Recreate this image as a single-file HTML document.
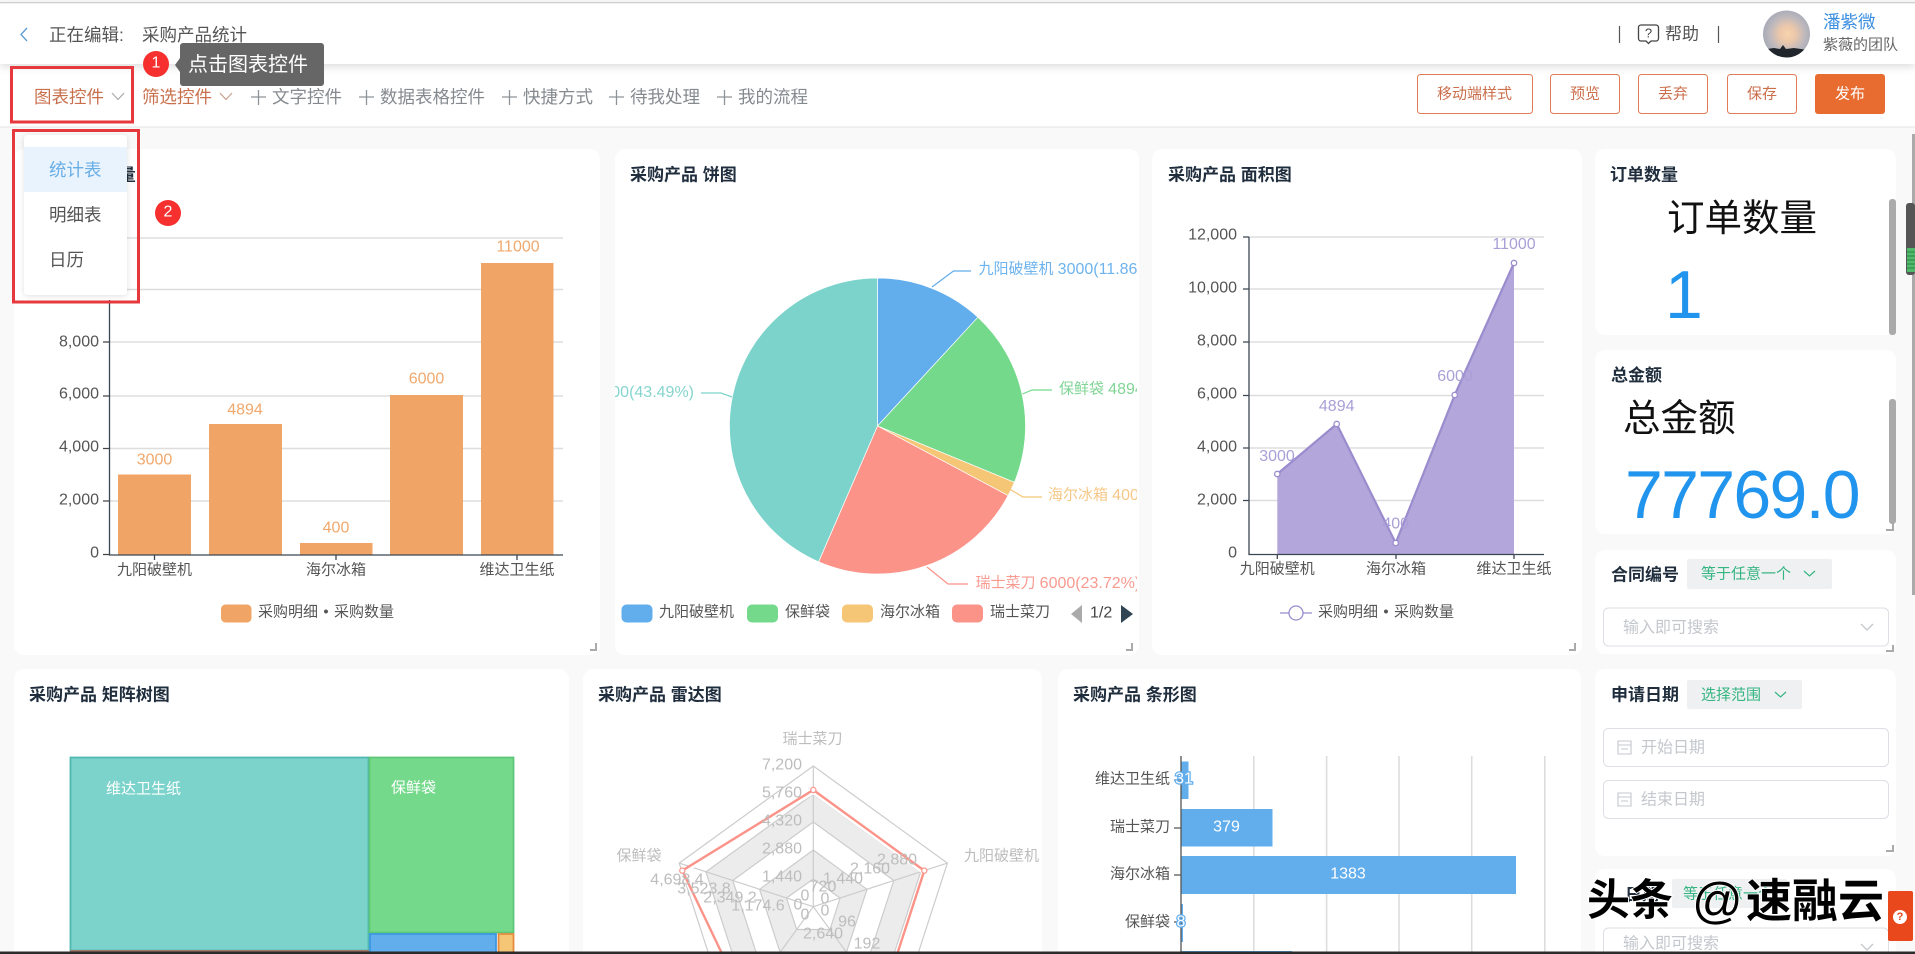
<!DOCTYPE html>
<html lang="zh">
<head>
<meta charset="utf-8">
<title>采购产品统计</title>
<style>
html,body{margin:0;padding:0;width:1915px;height:954px;overflow:hidden;background:#f9f9f9}
svg{display:block;position:absolute;left:0;top:0}
text{font-family:"Liberation Sans","Noto Sans CJK SC",sans-serif;dominant-baseline:central}
.t{font-size:17px;font-weight:700;fill:#1f2d3d}
.ax{font-size:16px;fill:#555}
.xl{font-size:15px;fill:#555}
.lg{word-spacing:1.2px}
.m{text-anchor:middle}
.e{text-anchor:end}
.o{font-size:16px;fill:#f1a86c;text-anchor:middle}
.p{font-size:16px;fill:#a99fd6;text-anchor:middle}
.r{font-size:16px;fill:#bdbdbd;text-anchor:middle}
.tb{font-size:17.5px;fill:#858a8f}
.btn{font-size:15px;fill:#cb6f4c;text-anchor:middle}
.gh{fill:none;stroke:#ddd;stroke-width:1.6}
.card{fill:#fff}
.hd{fill:none;stroke:#aaa;stroke-width:2}
.ph{font-size:16px;fill:#c4c7cc}
.gr{font-size:15px;fill:#35b582}
.bv{font-size:16px;fill:#fff;text-anchor:middle;stroke:#62aeed;stroke-width:2.5;paint-order:stroke}
</style>
</head>
<body>
<svg width="1915" height="954" viewBox="0 0 1915 954" xmlns="http://www.w3.org/2000/svg">
<defs>
<clipPath id="pc"><rect x="615" y="149" width="522" height="506"/></clipPath>
<clipPath id="av"><circle cx="1786.500" cy="34" r="23.500"/></clipPath>
<radialGradient id="ag" cx="0.52" cy="0.5" r="0.58">
<stop offset="0" stop-color="#f8d3ac"/><stop offset="0.3" stop-color="#ebc7ab"/><stop offset="0.65" stop-color="#bdb8bd"/><stop offset="1" stop-color="#9fa5b5"/>
</radialGradient>
<filter id="sh" x="-20%" y="-20%" width="140%" height="140%"><feDropShadow dx="0" dy="1" stdDeviation="3" flood-color="#000" flood-opacity=".12"/></filter>
<filter id="hs" x="0" y="-50%" width="100%" height="200%"><feDropShadow dx="0" dy="3" stdDeviation="4" flood-color="#000" flood-opacity=".13"/></filter>
</defs>

<rect width="1915" height="954" fill="#f9f9f9"/>

<!-- cards -->
<rect class="card" x="14" y="149" width="586" height="506" rx="10"/>
<rect class="card" x="615" y="149" width="524" height="506" rx="10"/>
<rect class="card" x="1152" y="149" width="430" height="506" rx="10"/>
<rect class="card" x="1595" y="149" width="301" height="186" rx="10"/>
<rect class="card" x="1595" y="350" width="301" height="184" rx="10"/>
<rect class="card" x="1595" y="550" width="301" height="104" rx="10"/>
<rect class="card" x="1595" y="669" width="301" height="187" rx="10"/>
<path class="card" d="M1595 954V879a10 10 0 0 1 10-10h281a10 10 0 0 1 10 10V954Z"/>
<path class="card" d="M14 954V679a10 10 0 0 1 10-10h535a10 10 0 0 1 10 10V954Z"/>
<path class="card" d="M583 954V679a10 10 0 0 1 10-10h439a10 10 0 0 1 10 10V954Z"/>
<path class="card" d="M1058 954V679a10 10 0 0 1 10-10h503a10 10 0 0 1 10 10V954Z"/>

<!-- bar chart -->
<text class="t" x="29" y="175">采购产品 数量</text>
<g class="gh">
<path d="M110 238H563M110 289.500H563M110 342H563M110 396H563M110 448.500H563M110 501H563"/>
</g>
<g fill="#555">
<text class="ax e" x="99" y="342">8,000</text>
<text class="ax e" x="99" y="394">6,000</text>
<text class="ax e" x="99" y="447">4,000</text>
<text class="ax e" x="99" y="500">2,000</text>
<text class="ax e" x="99" y="553">0</text>
</g>
<path d="M103 342h7M103 396h7M103 448.500h7M103 501h7M103 554.500h7" stroke="#444" stroke-width="1.300" fill="none"/>
<g fill="#f0a566">
<rect x="118" y="474.500" width="73" height="80"/>
<rect x="209" y="424" width="73" height="130.500"/>
<rect x="300" y="543" width="72.500" height="11.500"/>
<rect x="390" y="395" width="73" height="159.500"/>
<rect x="481" y="263" width="72.500" height="291.500"/>
</g>
<path d="M109.500 300V555H563M154.500 555v5M336 555v5M517 555v5" stroke="#3b4650" stroke-width="1.300" fill="none"/>
<text class="o" x="154.500" y="460">3000</text>
<text class="o" x="245" y="410">4894</text>
<text class="o" x="336" y="528">400</text>
<text class="o" x="426.500" y="379">6000</text>
<text class="o" x="518" y="247">11000</text>
<text class="xl m" x="154.500" y="570">九阳破壁机</text>
<text class="xl m" x="336" y="570">海尔冰箱</text>
<text class="xl m" x="517" y="570">维达卫生纸</text>
<rect x="221" y="604.500" width="30.500" height="18" rx="4.500" fill="#f0a566"/>
<text class="xl lg" x="258" y="612">采购明细 • 采购数量</text>
<path class="hd" d="M590 650h6v-7"/>

<!-- pie -->
<text class="t" x="630" y="175">采购产品 饼图</text>
<g clip-path="url(#pc)">
<g stroke="#fff" stroke-width=".7">
<path d="M877.500 426V278A148 148 0 0 1 977.900 317.200Z" fill="#62aeed"/>
<path d="M877.500 426L977.900 317.200A148 148 0 0 1 1014.400 482.300Z" fill="#75d98c"/>
<path d="M877.500 426L1014.400 482.300A148 148 0 0 1 1008.100 495.600Z" fill="#f6c677"/>
<path d="M877.500 426L1008.100 495.600A148 148 0 0 1 818.600 561.800Z" fill="#fb9389"/>
<path d="M877.500 426L818.600 561.800A148 148 0 0 1 877.500 278Z" fill="#7bd3cb"/>
</g>
<g fill="none" stroke-width="1.200">
<path d="M932 287L953.500 271H971" stroke="#62aeed"/>
<path d="M1022.500 394L1032 390H1052" stroke="#75d98c"/>
<path d="M1009.500 489L1023 497H1042" stroke="#f6c677"/>
<path d="M927 567L948 584H968" stroke="#fb9389"/>
<path d="M701 393H721L732 397" stroke="#7bd3cb"/>
</g>
<g font-size="15">
<text x="978.500" y="269" fill="#6db3ee">九阳破壁机 <tspan font-size="16">3000(11.86%)</tspan></text>
<text x="1059" y="389" fill="#80d596">保鲜袋 <tspan font-size="16">4894(19.35%)</tspan></text>
<text x="1048" y="495" fill="#f6c888">海尔冰箱 <tspan font-size="16">400(1.58%)</tspan></text>
<text x="975.500" y="583" fill="#f99a90">瑞士菜刀 <tspan font-size="16">6000(23.72%)</tspan></text>
<text x="694" y="392" fill="#85d5ce" text-anchor="end">维达卫生纸 <tspan font-size="16">11000(43.49%)</tspan></text>
</g>
</g>
<rect x="621.500" y="604.500" width="31" height="18" rx="5" fill="#62aeed"/>
<text class="xl" x="659" y="612">九阳破壁机</text>
<rect x="747" y="604.500" width="31" height="18" rx="5" fill="#75d98c"/>
<text class="xl" x="785" y="612">保鲜袋</text>
<rect x="842" y="604.500" width="31" height="18" rx="5" fill="#f6c677"/>
<text class="xl" x="880" y="612">海尔冰箱</text>
<rect x="952" y="604.500" width="31" height="18" rx="5" fill="#fb9389"/>
<text class="xl" x="990" y="612">瑞士菜刀</text>
<path d="M1082 605V623L1071 614Z" fill="#aaa"/>
<text x="1090" y="613" font-size="16" fill="#444">1/2</text>
<path d="M1121 605V623L1133 614Z" fill="#2f4554"/>
<path class="hd" d="M1126 650h6v-7"/>

<!-- area -->
<text class="t" x="1168" y="175">采购产品 面积图</text>
<path class="gh" d="M1249 237H1544M1249 289H1544M1249 342H1544M1249 395.500H1544M1249 448H1544M1249 500.500H1544"/>
<path d="M1277.300 474L1336.700 424L1395.700 543L1454.700 395L1514 263V554H1277.300Z" fill="#b3a6db"/>
<path d="M1277.300 474L1336.700 424L1395.700 543L1454.700 395L1514 263" fill="none" stroke="#9a8ccd" stroke-width="2.200"/>
<g fill="#fff" stroke="#9a8ccd" stroke-width="1.300">
<circle cx="1277.300" cy="474" r="2.700"/><circle cx="1336.700" cy="424" r="2.700"/><circle cx="1395.700" cy="543" r="2.700"/><circle cx="1454.700" cy="395" r="2.700"/><circle cx="1514" cy="263" r="2.700"/>
</g>
<path d="M1249 237V554.500H1544M1243 237h6M1243 289h6M1243 342h6M1243 395.500h6M1243 448h6M1243 500.500h6M1277.300 554v5M1396 554v5M1514 554v5" fill="none" stroke="#3b4650" stroke-width="1.300"/>
<g>
<text class="ax e" x="1237" y="235">12,000</text>
<text class="ax e" x="1237" y="288">10,000</text>
<text class="ax e" x="1237" y="341">8,000</text>
<text class="ax e" x="1237" y="394">6,000</text>
<text class="ax e" x="1237" y="447">4,000</text>
<text class="ax e" x="1237" y="500">2,000</text>
<text class="ax e" x="1237" y="553">0</text>
</g>
<text class="p" x="1277" y="456.500">3000</text>
<text class="p" x="1336.700" y="406.500">4894</text>
<text class="p" x="1395.700" y="524">400</text>
<text class="p" x="1455" y="376.500">6000</text>
<text class="p" x="1514" y="244.500">11000</text>
<text class="xl m" x="1277.300" y="569">九阳破壁机</text>
<text class="xl m" x="1396" y="569">海尔冰箱</text>
<text class="xl m" x="1514" y="569">维达卫生纸</text>
<path d="M1280 613h32" stroke="#9a8ccd" stroke-width="1.300"/>
<circle cx="1296" cy="613" r="7" fill="#fff" stroke="#9a8ccd" stroke-width="1.300"/>
<text class="xl lg" x="1318" y="612">采购明细 • 采购数量</text>
<path class="hd" d="M1569 650h6v-7"/>

<!-- order count -->
<text class="t" x="1610" y="175">订单数量</text>
<text x="1667" y="218" font-size="37.500" fill="#111">订单数量</text>
<text x="1665" y="295" font-size="68" fill="#2195ee">1</text>
<rect x="1889" y="199" width="7" height="136" rx="3" fill="#aaa"/>

<!-- total -->
<text class="t" x="1611" y="375.500">总金额</text>
<text x="1623" y="418" font-size="37.500" fill="#111">总金额</text>
<text x="1625" y="495" font-size="68" letter-spacing="-1.700" fill="#2195ee">77769.0</text>
<rect x="1889" y="399" width="7" height="125" rx="3" fill="#aaa"/>
<path class="hd" d="M1886 530h7v-7"/>

<!-- contract -->
<text class="t" x="1611" y="575">合同编号</text>
<rect x="1687" y="559" width="145" height="30" rx="2" fill="#eff0f1"/>
<text class="gr" x="1701" y="574">等于任意一个</text>
<path d="M1804 571l5.500 5 5.500-5" fill="none" stroke="#35b582" stroke-width="1.200"/>
<rect x="1603.500" y="608" width="285" height="38" rx="5" fill="#fff" stroke="#dcdfe4"/>
<text class="ph" x="1623" y="628">输入即可搜索</text>
<path d="M1861 624l6 6 6-6" fill="none" stroke="#c4c7cc" stroke-width="1.300"/>
<path class="hd" d="M1886 651h7v-6"/>

<!-- date -->
<text class="t" x="1611" y="695">申请日期</text>
<rect x="1687" y="680" width="115" height="29" rx="2" fill="#eff0f1"/>
<text class="gr" x="1701" y="695">选择范围</text>
<path d="M1775 692l5.500 5 5.500-5" fill="none" stroke="#35b582" stroke-width="1.200"/>
<rect x="1603.500" y="728.500" width="285" height="38" rx="5" fill="#fff" stroke="#dcdfe4"/>
<path d="M1618 741h13v13h-13zM1618 745h13M1621 749h7" fill="none" stroke="#c4c7cc" stroke-width="1.100"/>
<text class="ph" x="1641" y="748">开始日期</text>
<rect x="1603.500" y="780.500" width="285" height="38" rx="5" fill="#fff" stroke="#dcdfe4"/>
<path d="M1618 793h13v13h-13zM1618 797h13M1621 801h7" fill="none" stroke="#c4c7cc" stroke-width="1.100"/>
<text class="ph" x="1641" y="800">结束日期</text>
<path class="hd" d="M1886 851h7v-6"/>

<!-- last filter -->
<text class="t" x="1625" y="895">日期</text>
<rect x="1672" y="879" width="115" height="29" rx="2" fill="#eff0f1"/>
<text class="gr" x="1683" y="894">等于任意一个</text>
<path d="M1603.500 954V933a5 5 0 0 1 5-5h275a5 5 0 0 1 5 5V954" fill="#fff" stroke="#dcdfe4"/>
<text class="ph" x="1623" y="944">输入即可搜索</text>
<path d="M1861 944l6 6 6-6" fill="none" stroke="#c4c7cc" stroke-width="1.300"/>

<!-- treemap -->
<text class="t" x="29" y="695">采购产品 矩阵树图</text>
<rect x="70.500" y="757.500" width="298" height="193" fill="#7bd3cb" stroke="#4fb9b1" stroke-width="1.800"/>
<rect x="369.500" y="757.500" width="144" height="175" fill="#75d98c" stroke="#5ec678" stroke-width="1.800"/>
<path d="M370 953V934H496V953" fill="#62aeed" stroke="#3a98e0" stroke-width="1.800"/>
<path d="M498.500 953V934H513.500V953" fill="#f6c677" stroke="#e58b3e" stroke-width="1.800"/>
<rect x="70" y="950" width="299" height="4" fill="#a5766a"/>
<text x="106" y="789" font-size="15" fill="#fff">维达卫生纸</text>
<text x="391" y="788" font-size="15" fill="#fff">保鲜袋</text>

<!-- radar -->
<text class="t" x="598" y="695">采购产品 雷达图</text>
<g>
<path fill-rule="evenodd" fill="#ececec" d="M813.300 794L920.700 871.900L894 954L732.600 954L705.900 871.900Z M813.300 822L893.800 880.500L869.900 954L756.700 954L732.800 880.500Z"/>
<path fill-rule="evenodd" fill="#ececec" d="M813.300 850L867 889.300L846.500 952.300L780.100 952.300L759.600 889.300Z M813.300 879L840.100 898L830 929.500L796.700 929.500L786.500 898Z"/>
<g fill="none" stroke="#ccc" stroke-width="1.200">
<path d="M708.700 954L679.200 863.100L813.300 766L947.400 863.100L917.900 954"/>
<path d="M732.600 954L705.900 871.900L813.300 794L920.700 871.900L894 954"/>
<path d="M756.700 954L732.800 880.500L813.300 822L893.800 880.500L869.900 954"/>
<path d="M813.300 850L867 889.300L846.500 952.300L780.100 952.300L759.600 889.300Z"/>
<path d="M813.300 879L840.100 898L830 929.500L796.700 929.500L786.500 898Z"/>
<path d="M813.300 906.700V766M813.300 906.700L947.400 863.100M813.300 906.700L847.700 954M813.300 906.700L778.900 954M813.300 906.700L679.200 863.100"/>
</g>
<path d="M722.200 952L682.300 872.600L813.300 792L924.300 872.600L897.200 952" fill="none" stroke="#fff" stroke-width="4"/>
<path d="M722.200 954L682.300 870.600L813.300 790L924.300 870.600L897.200 954" fill="none" stroke="#fb9389" stroke-width="2.400"/>
<g fill="#fff" stroke="#fb9389" stroke-width="1.200">
<circle cx="813.300" cy="790" r="2.600"/><circle cx="924.300" cy="870.600" r="2.600"/><circle cx="682.300" cy="870.600" r="2.600"/>
</g>
</g>
<g>
<text class="r" style="font-size:15px" x="812.500" y="739">瑞士菜刀</text>
<text class="r" style="font-size:15px" x="1001.500" y="856">九阳破壁机</text>
<text class="r" style="font-size:15px" x="639" y="856">保鲜袋</text>
<text class="r" style="text-anchor:end" x="802" y="765">7,200</text>
<text class="r" style="text-anchor:end" x="802" y="793">5,760</text>
<text class="r" style="text-anchor:end" x="802" y="821">4,320</text>
<text class="r" style="text-anchor:end" x="802" y="849">2,880</text>
<text class="r" style="text-anchor:end" x="802" y="877">1,440</text>
<text class="r" x="805" y="896">0</text>
<text class="r" x="897" y="860">2,880</text>
<text class="r" x="870" y="869">2,160</text>
<text class="r" x="843" y="879">1,440</text>
<text class="r" x="823" y="887">720</text>
<text class="r" x="825" y="899">0</text>
<text class="r" x="677" y="880">4,698.4</text>
<text class="r" x="704" y="889">3,523.8</text>
<text class="r" x="730" y="898">2,349.2</text>
<text class="r" x="758" y="906">1,174.6</text>
<text class="r" x="798" y="905">0</text>
<text class="r" x="805" y="915">0</text>
<text class="r" x="825" y="911">0</text>
<text class="r" x="847" y="922">96</text>
<text class="r" x="867" y="944">192</text>
<text class="r" x="823" y="934">2,640</text>
</g>

<!-- horizontal bar -->
<text class="t" x="1073" y="695">采购产品 条形图</text>
<path class="gh" d="M1253.800 756V954M1326.600 756V954M1399 756V954M1471.700 756V954M1544.800 756V954"/>
<g fill="#62aeed">
<rect x="1181" y="761.500" width="7.500" height="37.500"/>
<rect x="1181" y="809" width="91.500" height="37.500"/>
<rect x="1181" y="856" width="335" height="38"/>
<rect x="1181" y="904" width="2" height="38"/>
<rect x="1181" y="951" width="111" height="3"/>
</g>
<path d="M1181 756V954M1174 780h7M1174 828h7M1174 875h7M1174 922h7" fill="none" stroke="#555" stroke-width="1.300"/>
<text class="xl e" x="1170" y="779">维达卫生纸</text>
<text class="xl e" x="1170" y="827">瑞士菜刀</text>
<text class="xl e" x="1170" y="874">海尔冰箱</text>
<text class="xl e" x="1170" y="922">保鲜袋</text>
<text class="bv" x="1184" y="779">31</text>
<text class="bv" x="1226.500" y="827">379</text>
<text class="bv" x="1348" y="874">1383</text>
<text class="bv" x="1181" y="922">8</text>

<!-- bottom bar -->
<rect x="0" y="951.500" width="1915" height="2.500" fill="#2b2b2b"/>

<!-- toolbar -->
<rect x="0" y="64" width="1915" height="63" fill="#fff"/>
<rect x="0" y="126.500" width="1915" height="1" fill="#e4e4e4"/>
<text x="34" y="97" font-size="17.500" fill="#c9714e">图表控件</text>
<path d="M112 93l6 6.500 6-6.500" fill="none" stroke="#aaa" stroke-width="1.200"/>
<text x="142" y="97" font-size="17.500" fill="#c9714e">筛选控件</text>
<path d="M220 93l6 6.500 6-6.500" fill="none" stroke="#c9a090" stroke-width="1.200"/>
<path d="M251 97h15M258.500 90v15M359 97h15M366.500 90v15M502 97h15M509.500 90v15M609 97h15M616.500 90v15M717 97h15M724.500 90v15" stroke="#8f9498" stroke-width="1.300" fill="none"/>
<text class="tb" x="272" y="97">文字控件</text>
<text class="tb" x="380" y="97">数据表格控件</text>
<text class="tb" x="523" y="97">快捷方式</text>
<text class="tb" x="630" y="97">待我处理</text>
<text class="tb" x="738" y="97">我的流程</text>

<g fill="#fff" stroke="#e07c55" stroke-width="1">
<rect x="1417.500" y="74.500" width="115" height="39" rx="3"/>
<rect x="1550.500" y="74.500" width="69" height="39" rx="3"/>
<rect x="1638.500" y="74.500" width="69" height="39" rx="3"/>
<rect x="1727.500" y="74.500" width="69" height="39" rx="3"/>
</g>
<rect x="1815" y="74" width="70" height="40" rx="3" fill="#e86c30"/>
<text class="btn" x="1474.500" y="94">移动端样式</text>
<text class="btn" x="1585" y="94">预览</text>
<text class="btn" x="1673" y="94">丢弃</text>
<text class="btn" x="1762" y="94">保存</text>
<text class="btn" style="fill:#fff" x="1850" y="94">发布</text>

<!-- header -->
<rect x="0" y="2" width="1915" height="62" fill="#fff" filter="url(#hs)"/>
<rect x="0" y="2" width="1915" height="1.300" fill="#cfcfcf"/>
<path d="M27 28l-6 6.500 6 6.500" fill="none" stroke="#5b9bd5" stroke-width="1.300"/>
<text x="49" y="35" font-size="17.500" fill="#555">正在编辑:</text>
<text x="142" y="35" font-size="17.500" fill="#555">采购产品统计</text>
<path d="M1619.500 26v17M1718.500 26v17" stroke="#555" stroke-width="1.200"/>
<path d="M1641 25h15a2.500 2.500 0 0 1 2.500 2.500v11a2.500 2.500 0 0 1-2.500 2.500h-5l-2.500 2.500-2.500-2.500h-5a2.500 2.500 0 0 1-2.500-2.500v-11a2.500 2.500 0 0 1 2.500-2.500z" fill="none" stroke="#444" stroke-width="1.300"/>
<text x="1648.500" y="33" font-size="13" fill="#444" text-anchor="middle">?</text>
<text x="1665" y="34" font-size="17" fill="#555">帮助</text>
<circle cx="1786.500" cy="34" r="23.500" fill="url(#ag)"/>
<path d="M1760 50q8-1 14-2l6 1 3-4 3 4 8-1 14 2 4 2v10h-52z" fill="#20262c" clip-path="url(#av)"/>
<text x="1823" y="22" font-size="17.500" fill="#3d8fe0">潘紫微</text>
<text x="1823" y="45" font-size="15" fill="#666">紫薇的团队</text>

<!-- tooltip -->
<path d="M180 58l-5 7 5 7z" fill="#666"/>
<rect x="180" y="43" width="144" height="43" rx="3" fill="#666"/>
<text x="188" y="65" font-size="20" fill="#fff">点击图表控件</text>

<!-- dropdown -->
<rect x="24" y="135" width="103" height="160" rx="4" fill="#fff" filter="url(#sh)"/>
<rect x="24" y="147" width="103" height="45" fill="#e8f3fd"/>
<text x="49" y="170" font-size="17.500" fill="#6aaee6">统计表</text>
<text x="49" y="215" font-size="17.500" fill="#555">明细表</text>
<text x="49" y="260" font-size="17.500" fill="#555">日历</text>

<!-- highlight rects -->
<rect x="11.500" y="67.500" width="121" height="54.500" fill="none" stroke="#e5393e" stroke-width="3"/>
<rect x="13.500" y="130.500" width="125" height="171.500" fill="none" stroke="#e5393e" stroke-width="3"/>
<circle cx="156" cy="64" r="13" fill="#f5302f"/>
<text x="156" y="63" font-size="16" fill="#fff" text-anchor="middle">1</text>
<circle cx="168" cy="213" r="13" fill="#f5302f"/>
<text x="168" y="212" font-size="16" fill="#fff" text-anchor="middle">2</text>

<!-- right scrollbars -->
<rect x="1912" y="134" width="3" height="461" fill="#aaa"/>
<rect x="1906" y="203" width="9" height="72" rx="3" fill="#555"/>
<rect x="1907" y="248" width="8" height="24" fill="#4fbb6a"/>
<path d="M1907 252h8M1907 256h8M1907 260h8M1907 264h8M1907 268h8" stroke="#2d7f45" stroke-width="1"/>

<!-- help button -->
<rect x="1888" y="891" width="25" height="50" rx="2" fill="#e8481c"/>
<circle cx="1900" cy="917" r="7" fill="#fff"/>
<text x="1900" y="917" font-size="11" font-weight="700" fill="#e8481c" text-anchor="middle">?</text>

<!-- watermark -->
<g font-weight="700" fill="#000" stroke="#fff" stroke-width="1.800" style="paint-order:stroke">
<text x="1587" y="901" font-size="43">头条</text>
<text x="1692" y="901" font-size="50" font-weight="400">@</text>
<text x="1746" y="901" font-size="46">速融云</text>
</g>
</svg>
</body>
</html>
